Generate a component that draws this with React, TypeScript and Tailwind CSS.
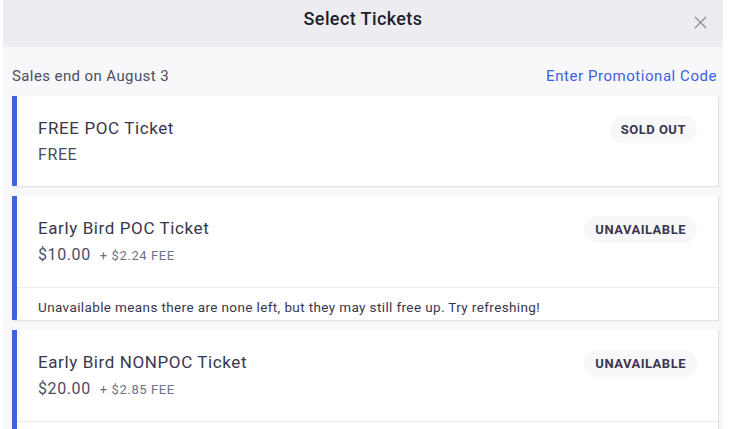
import React from "react";

const font = { fontFamily: "Roboto, 'Liberation Sans', sans-serif" };

function Badge({ label }: { label: string }) {
  return (
    <span className="rounded-full bg-[#f8f7fa] px-[11px] py-[6px] text-[13px] font-bold tracking-[0.5px] text-[#39364f] leading-[15px]">
      {label}
    </span>
  );
}

function Card({
  title,
  price,
  fee,
  badge,
  note,
}: {
  title: string;
  price: string;
  fee?: string;
  badge: string;
  note?: string;
}) {
  return (
    <div className="flex ml-[9px] w-[706px] bg-white shadow-[1px_1px_1px_rgba(40,40,70,0.10)]">
      <div className="w-[5px] shrink-0 bg-[#3d63dd] rounded-b-[1px]" />
      <div className="flex-1">
        <div className="flex items-start justify-between pl-[21px] pr-[21px] pt-[19px] pb-[18px]">
          <div>
            <div className="text-[17px] leading-[26px] tracking-[0.6px] text-[#39364f]">{title}</div>
            <div className="flex items-baseline gap-[9px] leading-[26px] mt-[1px]">
              <span className="text-[16px] tracking-[0.6px] text-[#4b4d63]">{price}</span>
              {fee && <span className="text-[13px] tracking-[0.6px] text-[#6f7287]">{fee}</span>}
            </div>
          </div>
          <div className="pt-[2px]">
            <Badge label={badge} />
          </div>
        </div>
        {note !== undefined && (
          <div className="border-t border-[#ececf0] pl-[21px] pt-[11px] pb-[5px] text-[13.5px] tracking-[0.38px] leading-[16px] text-[#39364f] min-h-[33px]">
            {note}
          </div>
        )}
      </div>
    </div>
  );
}

export default function App() {
  return (
    <div className="w-[740px] h-[429px] bg-white overflow-hidden" style={font}>
      <div className="ml-[3px] w-[720px] h-[429px] bg-[#f8f8fa]">
        <div className="relative h-[47px] bg-[#ededf1] flex items-center justify-center">
          <span className="text-[18px] font-medium tracking-[0.4px] text-[#1e1e2e] -mt-[10px]">Select Tickets</span>
          <svg
            className="absolute right-[16px] top-[16px]"
            width="13"
            height="13"
            viewBox="0 0 13 13"
            fill="none"
            stroke="#8a8c9c"
            strokeWidth="1.3"
          >
            <path d="M1 1L12 12M12 1L1 12" />
          </svg>
        </div>
        <div className="flex items-center justify-between h-[49px] pl-[9px] pr-[6px] pt-[10px]">
          <span className="text-[15px] tracking-[0.4px] text-[#4b4d63]">Sales end on August 3</span>
          <span className="text-[15px] tracking-[0.55px] text-[#3d5fe0]">Enter Promotional Code</span>
        </div>
        <div className="flex flex-col gap-[10px]">
          <Card title="FREE POC Ticket" price="FREE" badge="SOLD OUT" />
          <Card
            title="Early Bird POC Ticket"
            price="$10.00"
            fee="+ $2.24 FEE"
            badge="UNAVAILABLE"
            note="Unavailable means there are none left, but they may still free up. Try refreshing!"
          />
          <Card
            title="Early Bird NONPOC Ticket"
            price="$20.00"
            fee="+ $2.85 FEE"
            badge="UNAVAILABLE"
            note=""
          />
        </div>
      </div>
    </div>
  );
}
